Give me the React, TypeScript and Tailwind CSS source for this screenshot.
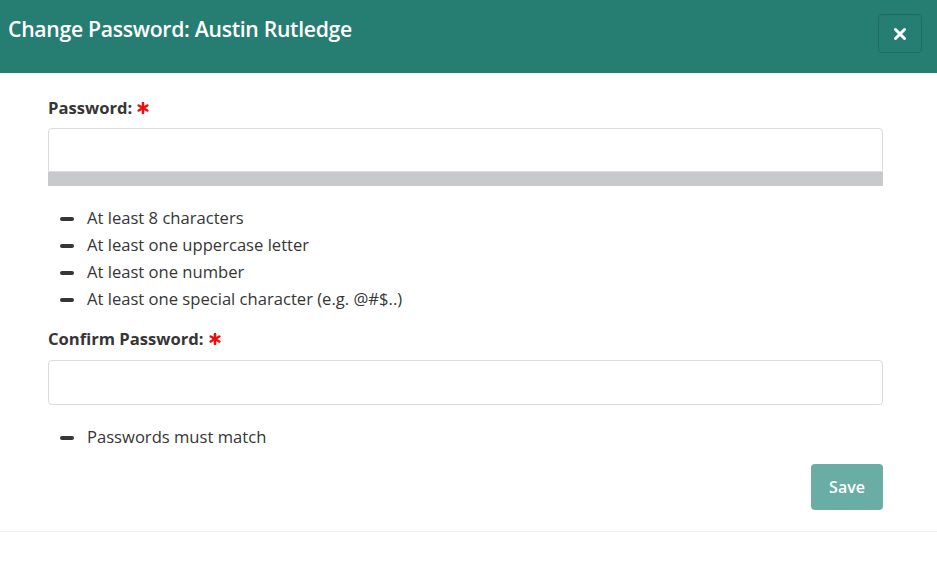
import { X } from 'lucide-react';

const rules = [
  'At least 8 characters',
  'At least one uppercase letter',
  'At least one number',
  'At least one special character (e.g. @#$..)',
];

export default function App() {
  return (
    <div className="w-[937px] h-[565px] bg-white font-['Open_Sans',sans-serif] text-[#363636]">
      <div className="h-[73px] bg-[#267d72] flex items-start justify-between pl-2 pr-[15px] pt-[14px]">
        <h1 className="text-white text-[21.2px] font-semibold leading-[30px] tracking-[-0.3px]">
          Change Password: Austin Rutledge
        </h1>
        <button className="w-[44px] h-[39px] rounded border border-[#1f6b61] flex items-center justify-center text-white">
          <X size={18} strokeWidth={4} />
        </button>
      </div>

      <div className="border-b border-[#eeeeee] pl-12 pr-[54px] pt-[24px] pb-[21px]">
        <Label text="Password:" />
        <div className="mt-[9px]">
          <input className="block w-full h-[44px] border border-[#dbdbdb] rounded-t-sm outline-none" />
          <div className="h-[14px] bg-[#c8c9cc]" />
        </div>
        <ul className="mt-[19px] flex flex-col">
          {rules.map((r) => (
            <Rule key={r} text={r} />
          ))}
        </ul>

        <div className="mt-[15px]">
          <Label text="Confirm Password:" />
        </div>
        <input className="mt-[10px] block w-full h-[45px] border border-[#dbdbdb] rounded-sm outline-none" />
        <ul className="mt-[19px]">
          <Rule text="Passwords must match" />
        </ul>

        <div className="flex justify-end mt-[13px]">
          <button className="w-[72px] h-[46px] rounded bg-[#6aada4] text-white text-[16px] font-semibold">
            Save
          </button>
        </div>
      </div>
    </div>
  );
}

function Label({ text }: { text: string }) {
  return (
    <label className="flex items-center gap-[5px] text-[16.6px] font-bold text-[#363636] leading-[22px]">
      {text}
      <svg width="12" height="12" viewBox="0 0 12 12" className="text-[#f20c0c]">
        <g stroke="currentColor" strokeWidth="2.6" strokeLinecap="round">
          <line x1="6" y1="1" x2="6" y2="11" />
          <line x1="1.7" y1="3.5" x2="10.3" y2="8.5" />
          <line x1="1.7" y1="8.5" x2="10.3" y2="3.5" />
        </g>
      </svg>
    </label>
  );
}

function Rule({ text }: { text: string }) {
  return (
    <li className="flex items-center h-[27px] pl-3 text-[16.6px] text-[#363636]">
      <span className="w-[14px] h-[4px] rounded-sm bg-[#363636] mr-[13px]" />
      {text}
    </li>
  );
}
